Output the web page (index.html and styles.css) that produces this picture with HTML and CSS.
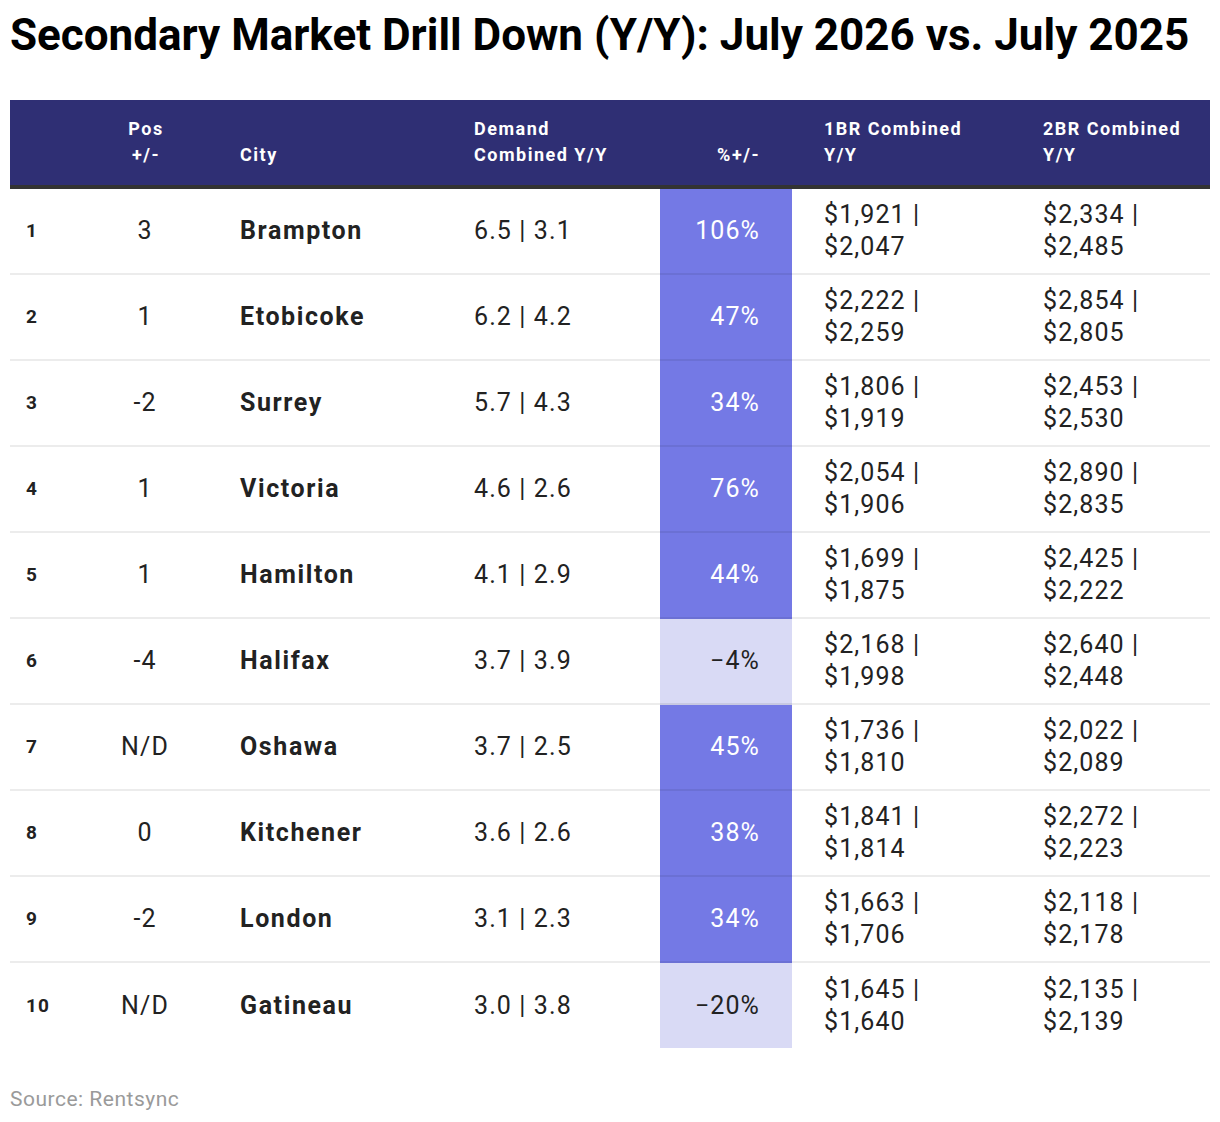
FILE: index.html
```html
<!DOCTYPE html>
<html>
<head>
<meta charset="utf-8">
<link rel="stylesheet" href="styles.css">
</head>
<body>
<div class="page">
  <h1 class="title">Secondary Market Drill Down (Y/Y): July 2026 vs. July 2025</h1>
  <table class="grid">
    <colgroup>
      <col class="w-rank"><col class="w-pos"><col class="w-city"><col class="w-dem"><col class="w-pct"><col class="w-br1"><col class="w-br2">
    </colgroup>
    <thead>
      <tr>
        <th class="c-rank"></th>
        <th class="c-pos">Pos<br>+/-</th>
        <th class="c-city">City</th>
        <th class="c-dem">Demand<br>Combined Y/Y</th>
        <th class="c-pct">%+/-</th>
        <th class="c-br">1BR Combined<br>Y/Y</th>
        <th class="c-br">2BR Combined<br>Y/Y</th>
      </tr>
    </thead>
    <tbody>
      <tr><td class="c-rank">1</td><td class="c-pos">3</td><td class="c-city">Brampton</td><td class="c-dem">6.5 | 3.1</td><td class="c-pct up">106%</td><td class="c-br">$1,921 |<br>$2,047</td><td class="c-br">$2,334 |<br>$2,485</td></tr>
      <tr><td class="c-rank">2</td><td class="c-pos">1</td><td class="c-city">Etobicoke</td><td class="c-dem">6.2 | 4.2</td><td class="c-pct up">47%</td><td class="c-br">$2,222 |<br>$2,259</td><td class="c-br">$2,854 |<br>$2,805</td></tr>
      <tr><td class="c-rank">3</td><td class="c-pos">-2</td><td class="c-city">Surrey</td><td class="c-dem">5.7 | 4.3</td><td class="c-pct up">34%</td><td class="c-br">$1,806 |<br>$1,919</td><td class="c-br">$2,453 |<br>$2,530</td></tr>
      <tr><td class="c-rank">4</td><td class="c-pos">1</td><td class="c-city">Victoria</td><td class="c-dem">4.6 | 2.6</td><td class="c-pct up">76%</td><td class="c-br">$2,054 |<br>$1,906</td><td class="c-br">$2,890 |<br>$2,835</td></tr>
      <tr><td class="c-rank">5</td><td class="c-pos">1</td><td class="c-city">Hamilton</td><td class="c-dem">4.1 | 2.9</td><td class="c-pct up">44%</td><td class="c-br">$1,699 |<br>$1,875</td><td class="c-br">$2,425 |<br>$2,222</td></tr>
      <tr><td class="c-rank">6</td><td class="c-pos">-4</td><td class="c-city">Halifax</td><td class="c-dem">3.7 | 3.9</td><td class="c-pct down">−4%</td><td class="c-br">$2,168 |<br>$1,998</td><td class="c-br">$2,640 |<br>$2,448</td></tr>
      <tr><td class="c-rank">7</td><td class="c-pos">N/D</td><td class="c-city">Oshawa</td><td class="c-dem">3.7 | 2.5</td><td class="c-pct up">45%</td><td class="c-br">$1,736 |<br>$1,810</td><td class="c-br">$2,022 |<br>$2,089</td></tr>
      <tr><td class="c-rank">8</td><td class="c-pos">0</td><td class="c-city">Kitchener</td><td class="c-dem">3.6 | 2.6</td><td class="c-pct up">38%</td><td class="c-br">$1,841 |<br>$1,814</td><td class="c-br">$2,272 |<br>$2,223</td></tr>
      <tr><td class="c-rank">9</td><td class="c-pos">-2</td><td class="c-city">London</td><td class="c-dem">3.1 | 2.3</td><td class="c-pct up">34%</td><td class="c-br">$1,663 |<br>$1,706</td><td class="c-br">$2,118 |<br>$2,178</td></tr>
      <tr class="last"><td class="c-rank">10</td><td class="c-pos">N/D</td><td class="c-city">Gatineau</td><td class="c-dem">3.0 | 3.8</td><td class="c-pct down">−20%</td><td class="c-br">$1,645 |<br>$1,640</td><td class="c-br">$2,135 |<br>$2,139</td></tr>
    </tbody>
  </table>
  <div class="source">Source: Rentsync</div>
</div>
</body>
</html>
```

FILE: styles.css
```css
html, body {
  margin: 0;
  padding: 0;
  background: #ffffff;
}
body {
  font-family: Roboto, "Liberation Sans", Arial, sans-serif;
  color: #222222;
}
.page {
  padding: 0 10px;
  width: 1200px;
}
.title {
  margin: 0;
  padding-top: 11px;
  height: 100px;
  box-sizing: border-box;
  font-size: 44px;
  line-height: 48px;
  font-weight: 700;
  color: #000000;
  white-space: nowrap;
}
.grid {
  width: 1200px;
  border-collapse: separate;
  border-spacing: 0;
  table-layout: fixed;
}
.w-rank { width: 80px; }
.w-pos { width: 110px; }
.w-city { width: 258px; }
.w-dem { width: 202px; }
.w-pct { width: 132px; }
.w-br1 { width: 219px; }
.w-br2 { width: 199px; }

thead th {
  background: #2f2f74;
  color: #ffffff;
  font-size: 18px;
  line-height: 26px;
  letter-spacing: 1.5px;
  font-weight: 700;
  height: 89px;
  box-sizing: border-box;
  padding: 0 0 17px 0;
  vertical-align: bottom;
  text-align: left;
  border-bottom: 4px solid #333333;
}
tbody td {
  height: 86px;
  box-sizing: border-box;
  padding: 0;
  vertical-align: middle;
  font-size: 25px;
  line-height: 32px;
  letter-spacing: 1.1px;
  color: #222222;
  border-bottom: 2px solid rgba(0, 0, 0, 0.075);
}
tbody tr.last td {
  border-bottom: 0;
  height: 85px;
}
tbody td.c-rank {
  padding-left: 16px;
  font-size: 19px;
  letter-spacing: 1px;
  font-weight: 700;
}
.c-pos { text-align: center; }
th.c-pos { padding-left: 2px; }
th.c-city,
td.c-city {
  padding-left: 40px;
}
td.c-city {
  font-weight: 700;
  letter-spacing: 1.6px;
}
th.c-dem,
td.c-dem {
  padding-left: 16px;
}
th.c-pct,
td.c-pct {
  text-align: right;
  padding-right: 32px;
}
th.c-br,
td.c-br {
  padding-left: 32px;
}
td.up {
  background: #7479e5;
  color: #ffffff;
}
td.down {
  background: #d9daf5;
  color: #222222;
}
.source {
  margin-top: 39px;
  font-size: 21px;
  line-height: 24px;
  letter-spacing: 0.5px;
  color: #9a9a9a;
}
```
